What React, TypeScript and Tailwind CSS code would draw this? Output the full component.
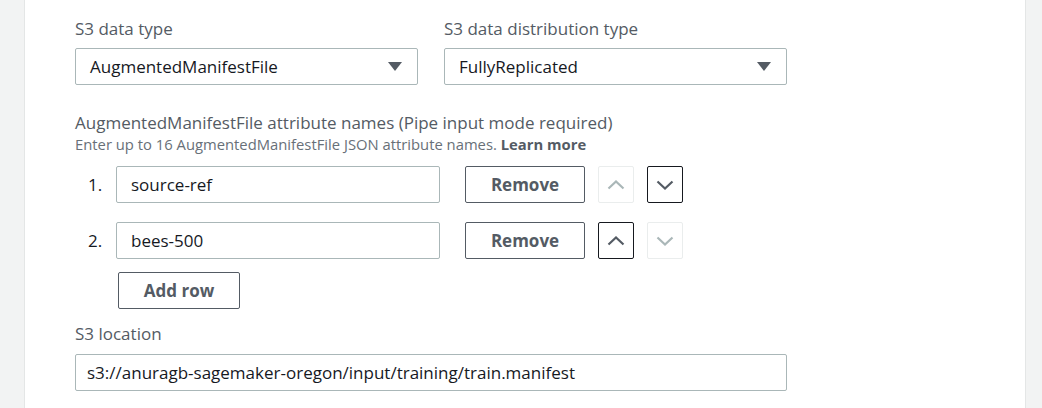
const rows = [
  { name: "source-ref", up: false, down: true },
  { name: "bees-500", up: true, down: false },
];

function SelectBox({ value }: { value: string }) {
  return (
    <div className="flex items-center justify-between h-[37px] px-[14px] border border-[#aab7b8] rounded-[2px] bg-white text-[17px] text-[#16191f]">
      <span>{value}</span>
      <svg width="14" height="10" viewBox="0 0 14 10" className="mr-[1px]">
        <path d="M0 0 H14 L7 9 Z" fill="#545b64" />
      </svg>
    </div>
  );
}

function ArrowButton({ dir, enabled }: { dir: "up" | "down"; enabled: boolean }) {
  return (
    <div
      className={
        enabled
          ? "flex items-center justify-center w-[36px] h-[37px] border border-[#16191f] rounded-[2px] text-[#545b64]"
          : "flex items-center justify-center w-[36px] h-[37px] border border-[#eaeded] rounded-[2px] text-[#aab7b8]"
      }
    >
      <svg width="18" height="10" viewBox="0 0 18 10" fill="none">
        <path
          d={dir === "up" ? "M1.5 8.5 L9 1.5 L16.5 8.5" : "M1.5 1.5 L9 8.5 L16.5 1.5"}
          stroke="currentColor"
          strokeWidth="2.2"
        />
      </svg>
    </div>
  );
}

export default function App() {
  return (
    <div className="flex h-[408px] w-[1042px] bg-[#f2f3f3] font-['Open_Sans',sans-serif] text-[#545b64] overflow-hidden">
      <div className="w-[24px] shrink-0" />
      <div className="w-[1002px] shrink-0 bg-white border-x border-[#e4e6e6] pl-[50px] pt-[17px]">
        <div className="grid grid-cols-[343px_343px] gap-x-[26px]">
          <div>
            <div className="text-[17px] leading-[24px] mb-[7px]">S3 data type</div>
            <SelectBox value="AugmentedManifestFile" />
          </div>
          <div>
            <div className="text-[17px] leading-[24px] mb-[7px]">S3 data distribution type</div>
            <SelectBox value="FullyReplicated" />
          </div>
        </div>

        <div className="mt-[27px] text-[17px] leading-[22px]">
          AugmentedManifestFile attribute names (Pipe input mode required)
        </div>
        <div className="text-[14.8px] leading-[21px] text-[#687078]">
          Enter up to 16 AugmentedManifestFile JSON attribute names.{" "}
          <span className="font-bold text-[#545b64]">Learn more</span>
        </div>

        <div className="mt-[11px] flex flex-col gap-[19px]">
          {rows.map((row, i) => (
            <div key={row.name} className="flex items-center">
              <div className="w-[41px] pl-[13px] text-[17px] text-[#16191f]">{i + 1}.</div>
              <div className="flex items-center w-[324px] h-[37px] px-[14px] border border-[#aab7b8] rounded-[2px] text-[17px] text-[#16191f]">
                {row.name}
              </div>
              <div className="ml-[25px] flex items-center justify-center w-[120px] h-[37px] border border-[#545b64] rounded-[2px] font-bold text-[17px] text-[#545b64]">
                Remove
              </div>
              <div className="ml-[13px]">
                <ArrowButton dir="up" enabled={row.up} />
              </div>
              <div className="ml-[13px]">
                <ArrowButton dir="down" enabled={row.down} />
              </div>
            </div>
          ))}
        </div>

        <div className="mt-[13px] ml-[43px] flex items-center justify-center w-[122px] h-[37px] border border-[#545b64] rounded-[2px] font-bold text-[17px] text-[#545b64]">
          Add row
        </div>

        <div className="mt-[13px] text-[17px] leading-[24px]">S3 location</div>
        <div className="mt-[8px] flex items-center w-[712px] h-[37px] px-[11px] border border-[#aab7b8] rounded-[2px] text-[17px] text-[#16191f]">
          s3://anuragb-sagemaker-oregon/input/training/train.manifest
        </div>
      </div>
    </div>
  );
}
